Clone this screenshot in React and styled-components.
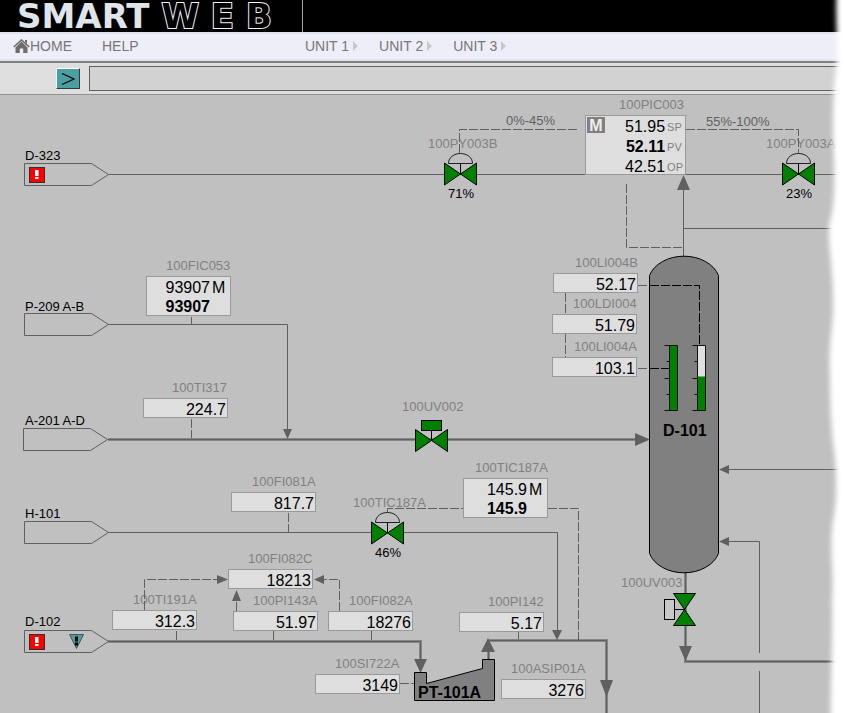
import React from "react";
import styled, { createGlobalStyle, css } from "styled-components";

const HEADER = 95;
const PIPE = "#606060";

const GlobalStyle = createGlobalStyle`
  * { box-sizing: border-box; }
  body {
    margin: 0;
    background: #c0c0c0;
    font-family: "Liberation Sans", Arial, sans-serif;
  }
`;

const Page = styled.div`
  position: relative;
  display: flex;
  flex-direction: column;
  min-height: 100vh;
  overflow: hidden;
`;

const Banner = styled.header`
  display: flex;
  height: 32px;
  background: #000;
`;

const Logo = styled.div`
  display: flex;
  align-items: center;
  gap: 12px;
  width: 303px;
  padding-left: 17px;
  border-right: 1px solid #a0a4a8;
  color: #dfe5ea;
  font: bold 34px/32px "DejaVu Sans", sans-serif;
  white-space: nowrap;
`;

const Outlined = styled.span`
  color: #000;
  -webkit-text-stroke: 2px #f0f2f4;
  paint-order: stroke;
`;

const Nav = styled.nav`
  display: flex;
  align-items: center;
  height: 31px;
  padding-bottom: 3px;
  background: #edeef7;
  border-top: 2px solid #dfe5ea;
  border-bottom: 2px solid #808080;
  box-shadow: inset 0 -2px #dfe5ea;
`;

const navText = css`
  display: flex;
  align-items: center;
  color: #777;
  font: 14px/16px "Liberation Sans", Arial, sans-serif;
  text-decoration: none;
`;

const NavLink = styled.a`
  ${navText}
`;

const MainLinks = styled.div`
  display: flex;
  gap: 30px;
  width: 305px;
  padding-left: 13px;
`;

const Units = styled.div`
  display: flex;
  gap: 20px;
`;

const UnitButton = styled.button`
  ${navText}
  gap: 4px;
  padding: 0;
  border: 0;
  background: none;
`;

const Toolbar = styled.form`
  display: flex;
  align-items: center;
  gap: 9px;
  height: 32px;
  padding-left: 56px;
  background: #dedede;
  border-bottom: 1px solid #909090;
`;

const GoButton = styled.button`
  display: flex;
  align-items: center;
  justify-content: center;
  width: 24px;
  height: 21px;
  padding: 0;
  background: #4aa0a0;
  border: 1px solid;
  border-color: #fff #303838 #303838 #fff;
`;

const CommandBox = styled.input`
  flex: 1;
  min-width: 0;
  height: 25px;
  padding: 0 6px;
  border: 1px solid #606060;
  border-right: 0;
  background: #d2d2d2;
  font: 14px "Liberation Sans", Arial, sans-serif;
`;

const Canvas = styled.main`
  position: relative;
  flex: 1;
  min-height: 618px;
  overflow: hidden;
  background: #c0c0c0;
`;

const Drawing = styled.svg`
  position: absolute;
  inset: 0;
  width: 100%;
  height: 100%;
`;

const TagText = styled.span`
  position: absolute;
  left: ${(p) => p.$x}px;
  top: ${(p) => p.$y - HEADER - 12}px;
  color: ${(p) => p.$color || "#808080"};
  font-size: ${(p) => p.$size || 13}px;
  font-weight: ${(p) => (p.$bold ? "bold" : "normal")};
  line-height: 16px;
  white-space: nowrap;
`;

const Readout = styled.div`
  position: absolute;
  left: ${(p) => p.$x}px;
  top: ${(p) => p.$y - HEADER}px;
  width: 85px;
  height: 20px;
  padding-right: 1px;
  border: 1px solid #999;
  background: #dedede;
  color: #000;
  font-size: 16px;
  line-height: 22px;
  text-align: right;
`;

const Controller = styled(Readout)`
  height: 40px;
  padding: 0 20px 0 0;
`;

const ControllerRow = styled.div`
  position: relative;
  height: 19px;
  font-weight: ${(p) => (p.$bold ? "bold" : "normal")};
`;

const Mode = styled.span`
  position: absolute;
  left: 100%;
  margin-left: 2px;
`;

const MainController = styled(Readout)`
  display: flex;
  gap: 2px;
  width: 101px;
  height: 60px;
  padding: 0 2px 0 1px;
`;

const ModeBadge = styled.span`
  width: 18px;
  height: 16px;
  margin: 1px auto 0 0;
  background: #808080;
  color: #eee;
  font: bold 16px/17px "Liberation Sans", Arial, sans-serif;
  text-align: center;
`;

const Column = styled.div`
  display: grid;
  grid-auto-rows: 20px;
  text-align: ${(p) => (p.$small ? "left" : "right")};
  font-size: ${(p) => (p.$small ? 11 : 16)}px;
  color: ${(p) => (p.$small ? "#808080" : "#000")};
`;

const TornEdge = styled.svg`
  position: absolute;
  top: 0;
  right: 0;
  width: 24px;
  height: 100%;
  pointer-events: none;
`;

const tags = [
  [619, 109, "100PIC003"], [428, 148, "100PY003B"], [766, 148, "100PY003A"],
  [166, 270, "100FIC053"], [172, 392, "100TI317"], [402, 411, "100UV002"],
  [475, 472, "100TIC187A"], [353, 507, "100TIC187A"], [252, 486, "100FI081A"],
  [248, 563, "100FI082C"], [133, 604, "100TI191A"], [253, 605, "100PI143A"],
  [349, 605, "100FI082A"], [488, 606, "100PI142"], [335, 668, "100SI722A"],
  [511, 673, "100ASIP01A"], [575, 267, "100LI004B"], [573, 308, "100LDI004"],
  [574, 351, "100LI004A"], [621, 587, "100UV003"],
];

const ranges = [[506, 125, "0%-45%"], [706, 126, "55%-100%"]];

const names = [
  [25, 160, "D-323"], [25, 311, "P-209 A-B"], [25, 425, "A-201 A-D"],
  [25, 518, "H-101"], [25, 626, "D-102"],
  [448, 198, "71%"], [786, 198, "23%"], [375, 557, "46%"],
];

const equipment = [[663, 435, "D-101"], [418, 697, "PT-101A"]];

const readouts = [
  [553, 273, "52.17"], [552, 314, "51.79"], [552, 357, "103.1"],
  [143, 398, "224.7"], [231, 492, "817.7"], [228, 569, "18213"],
  [112, 610, "312.3"], [233, 611, "51.97"], [328, 611, "18276"],
  [459, 612, "5.17"], [315, 674, "3149"], [501, 679, "3276"],
];

const controllers = [[146, 276, "93907"], [463, 478, "145.9"]];

const thinPipes =
  "M108 174.5H3000 M108 324.5H287.5V432 M108 532.5H557.5V634 M683.5 228.5H3000 M726 469.5H3000 M726 541.5H759.5V653 M759.5 671V3000 M191.5 317V324 M176.5 631V640 M273.5 631V640 M371.5 631V640 M518.5 632V640 M683.5 257V186";
const thickPipes = [
  "M108 439.5H640", "M108 641.5H420.5V664", "M488.5 660V640.5H606.5V3000",
  "M685.5 572V661.5H3000",
];
const signals =
  "M459.5 153V129.5H579 M686 129.5H798.5V153 M626.5 184V247.5H683 M638 285.5H650 M638 368.5H650 M565.5 293V314 M565.5 334V357 M191.5 419V438 M288.5 513V532 M387.5 512V508.5H463 M548 508.5H578.5V640 M400 683.5H414 M144.5 610V579.5H220 M236.5 611V598 M339.5 611V579.5H322";
const arrowHeads =
  "M283 429H292L287.5 439Z M635 433V446L650 439.5Z M552 630H562L557 640Z M414 659H427L420.5 673Z M481 652H495L488 638Z M600 680H613L606.5 697Z M677 190H690L683.5 175Z M719 469.5L729 465V474Z M719 541.5L729 537V546Z M679 646H692L685.5 661Z M217 575V584L228 579.5Z M232 601H241L236.5 590Z M314 579.5L324 575V584Z";

function Feed({ x = 24.5, y, alarm, warning }) {
  return (
    <g fill="none" stroke={PIPE}>
      <path d={`M${x} ${y - 11}H${x + 67}L${x + 84} ${y}L${x + 67} ${y + 11}H${x}Z`} />
      {alarm && (
        <>
          <rect x="29.5" y={y - 7} width="15" height="15" fill="#f00" stroke="#303030" />
          <path d={`M35 ${y - 4.5}H38.500V${y + 1.5}H35Z M35 ${y + 2.5}H38.500V${y + 4.5}H35Z`} fill="#fff" stroke="none" />
        </>
      )}
      {warning && (
        <>
          <path d={`M69.5 ${y - 7}H83.5L76.5 ${y + 7}Z`} fill="#4aa0a0" stroke="#505050" />
          <path d={`M75 ${y - 5}H78V${y}H75Z M75 ${y + 1}H78V${y + 4}H75Z`} fill="#000" stroke="none" />
        </>
      )}
    </g>
  );
}

function Valve({ x, y, dome }) {
  return (
    <g stroke="#000">
      <path d={`M${x - 16} ${y - 11}L${x} ${y}L${x - 16} ${y + 11}Z M${x + 16} ${y - 11}L${x} ${y}L${x + 16} ${y + 11}Z`} fill="#008000" />
      <path d={`M${x} ${y}V${y - 10}`} />
      {dome ? (
        <path d={`M${x - 12} ${y - 10.5}C${x - 12} ${y - 17} ${x - 6} ${y - 20.5} ${x} ${y - 20.5}S${x + 12} ${y - 17} ${x + 12} ${y - 10.5}Z`} fill="none" stroke="#202020" />
      ) : (
        <rect x={x - 10} y={y - 20} width="20" height="10" fill="#008000" />
      )}
    </g>
  );
}

function Gauge({ x, level }) {
  return (
    <g>
      <rect x={x} y="345.5" width="8" height="65" fill="#e0e0e0" />
      <rect x={x} y={level} width="8" height={410.5 - level} fill="#008000" />
      <path
        d={`M${x - 5} 345.5H${x + 8}V410.5H${x - 5} M${x} 345V411 M${x - 5} 378.5H${x} M${x - 3} 361.5H${x} M${x - 3} 394.5H${x}`}
        fill="none"
        stroke="#101010"
      />
    </g>
  );
}

function Plant() {
  return (
    <Drawing aria-hidden="true">
      <g transform={`translate(0 ${-HEADER})`}>
        <path d={thinPipes} fill="none" stroke={PIPE} />
        {thickPipes.map((d) => (
          <g key={d} fill="none">
            <path d={d} stroke="#868686" strokeWidth="3" />
            <path d={d} stroke={PIPE} />
          </g>
        ))}
        <path d={signals} fill="none" stroke={PIPE} strokeDasharray="9 2" />
        <path d={arrowHeads} fill={PIPE} />

        <Feed y={174.5} alarm />
        <Feed y={324.5} />
        <Feed x={23.5} y={439.5} />
        <Feed y={532.5} />
        <Feed y={641.5} alarm warning />

        <path d="M649.5 275.5A36 27 0 0 1 718.5 275.5V553.5A36 27 0 0 1 649.5 553.5Z" fill="#808080" stroke="#000" />
        <path d="M650 285.5H699.5V345 M650 368.5H669" fill="none" stroke="#000" strokeDasharray="9 2" />
        <Gauge x={669.5} level={345.5} />
        <Gauge x={697.5} level={376.5} />

        <Valve x={460.5} y={174} dome />
        <Valve x={798.5} y={174} dome />
        <Valve x={387.5} y={533} dome />
        <Valve x={431.5} y={440.5} />

        <path d="M674.5 609.5H684" stroke="#000" />
        <rect x="664.5" y="599.5" width="10" height="20" fill="#c8c8c8" stroke="#000" />
        <path d="M673.5 593.5H695.5L673.5 625.5H695.5Z" fill="#008000" stroke="#000" />

        <path d="M414.5 672.5H426.5V683.5L482.5 668.5V659.5H494.5V700.5H414.5Z" fill="#808080" stroke="#000" />
      </g>
    </Drawing>
  );
}

function HomeIcon() {
  return (
    <svg width="17" height="14" viewBox="0 0 17 14" aria-hidden="true">
      <path d="M8.500 2.600L14.500 8.500V14H10.200V9.500H6.800V14H2.500V8.500Z M12 1H14V5L12 3Z" fill="#6c6c6c" />
      <path d="M.8 8L8.500 1L16.200 8" fill="none" stroke="#6c6c6c" strokeWidth="1.600" />
    </svg>
  );
}

function Menu({ children }) {
  return (
    <UnitButton type="button">
      {children}
      <svg width="6" height="10" aria-hidden="true">
        <path d="M0 0L5 5L0 10Z" fill="#c8c8c8" />
      </svg>
    </UnitButton>
  );
}

export default function App() {
  return (
    <Page>
      <GlobalStyle />
      <Banner>
        <Logo>
          <span>SMART</span>
          <Outlined>W E B</Outlined>
        </Logo>
      </Banner>
      <Nav>
        <MainLinks>
          <NavLink href="#home"><HomeIcon />HOME</NavLink>
          <NavLink href="#help">HELP</NavLink>
        </MainLinks>
        <Units>
          <Menu>UNIT 1</Menu>
          <Menu>UNIT 2</Menu>
          <Menu>UNIT 3</Menu>
        </Units>
      </Nav>
      <Toolbar onSubmit={(e) => e.preventDefault()}>
        <GoButton type="submit" aria-label="Go">
          <svg width="14" height="14" aria-hidden="true">
            <path d="M1 1.500L13 7L1 12.500" fill="none" stroke="#000" strokeWidth="1.300" />
          </svg>
        </GoButton>
        <CommandBox type="text" aria-label="Command" />
      </Toolbar>
      <Canvas>
        {tags.map(([x, y, t]) => <TagText key={`${t}${x}`} $x={x} $y={y}>{t}</TagText>)}
        <Plant />
        {ranges.map(([x, y, t]) => <TagText key={t} $x={x} $y={y} $color="#606060">{t}</TagText>)}
        {names.map(([x, y, t]) => <TagText key={t} $x={x} $y={y} $color="#000">{t}</TagText>)}
        {equipment.map(([x, y, t]) => <TagText key={t} $x={x} $y={y} $color="#000" $size={16} $bold>{t}</TagText>)}
        {readouts.map(([x, y, t]) => <Readout key={t} $x={x} $y={y}>{t}</Readout>)}
        {controllers.map(([x, y, t]) => (
          <Controller key={t} $x={x} $y={y}>
            <ControllerRow>{t}<Mode>M</Mode></ControllerRow>
            <ControllerRow $bold>{t}</ControllerRow>
          </Controller>
        ))}
        <MainController $x={585} $y={115}>
          <ModeBadge>M</ModeBadge>
          <Column>
            <span>51.95</span>
            <b>52.11</b>
            <span>42.51</span>
          </Column>
          <Column $small>
            <span>SP</span>
            <span>PV</span>
            <span>OP</span>
          </Column>
        </MainController>
      </Canvas>
      <TornEdge viewBox="0 0 24 713" preserveAspectRatio="none" aria-hidden="true">
        <defs>
          <filter id="soft" x="-50%" y="-5%" width="200%" height="110%">
            <feGaussianBlur stdDeviation="2.500" />
          </filter>
        </defs>
        <path
          d="M17 -20C15 20 18 40 17 60C13 90 13 110 13 140C15 180 15 205 9 225C8 245 13 270 13 300C14 325 8 340 10 375C10 400 11 430 14 450C17 480 17 500 13 520C9 550 14 570 12 600C13 640 10 680 11 740H60V-20Z"
          fill="#fff"
          filter="url(#soft)"
        />
      </TornEdge>
    </Page>
  );
}
